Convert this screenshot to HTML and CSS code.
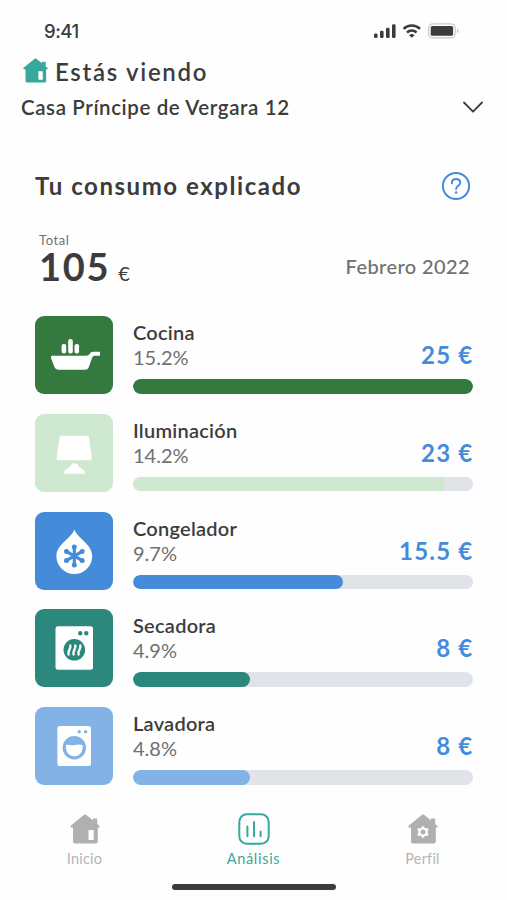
FILE: index.html
```html
<!DOCTYPE html>
<html lang="es">
<head>
<meta charset="utf-8">
<title>Tu consumo explicado</title>
<link rel="stylesheet" href="styles.css">
</head>
<body>
<div class="screen">
  <div class="status">
    <span class="clock">9:41</span>
    <svg class="status-icons" width="88" height="18" viewBox="0 0 88 18">
      <g fill="#3c3c3c">
        <rect x="1" y="11.400" width="3.600" height="4.600" rx="1.300"/><rect x="7" y="8.800" width="3.600" height="7.200" rx="1.300"/><rect x="13" y="5.700" width="3.600" height="10.300" rx="1.300"/><rect x="19" y="2.300" width="3.600" height="13.700" rx="1.300"/>
        <path d="M38.800 15.800l-2.700-2.600a4 4 0 0 1 5.400 0z"/>
      </g>
      <path d="M30.600 6.800a11.800 11.800 0 0 1 16.400 0M34 10.500a7 7 0 0 1 9.600 0" fill="none" stroke="#3c3c3c" stroke-width="2.500"/>
      <rect x="55.600" y="1.900" width="26.600" height="14" rx="4.200" fill="#fff" stroke="#cacaca" stroke-width="1.300"/>
      <rect x="57.700" y="4" width="22.400" height="9.800" rx="1.600" fill="#3c3c3c"/>
      <path d="M84 6.300q3 2.700 0 5.400z" fill="#cacaca"/>
    </svg>
  </div>
  <header class="top">
    <div class="viewing">
      <svg width="25" height="25" viewBox="0 0 30 30"><path fill="#38a79c" fill-rule="evenodd" d="M14 .8Q15 0 16 .8L23 6.300V4.500h4.200v5.500l2.200 1.900q1.100 1.400-.5 1.600H27.800V27.500q0 2-2 2H5q-2 0-2-2V13.500H1.200Q-.3 13.200.7 11.700ZM18.500 16v10h5.200V16Z"/></svg>
      <span class="viewing-title">Estás viendo</span>
    </div>
    <div class="home-select">
      <span class="home-name">Casa Príncipe de Vergara 12</span>
      <svg width="22" height="13" viewBox="0 0 22 13"><path d="M2 1.500L11 10.700L20 1.500" fill="none" stroke="#3c3c3c" stroke-width="1.800" stroke-linecap="round" stroke-linejoin="round"/></svg>
    </div>
  </header>
  <main>
    <div class="heading">
      <h1>Tu consumo explicado</h1>
      <svg width="30" height="30" viewBox="0 0 30 30" fill="none" stroke="#448cd9"><circle cx="15" cy="15" r="13.100" stroke-width="2"/><path d="M10.900 12.200C10.900 6.600 19.300 6.700 19.300 11.700C19.300 14.500 15.100 14.900 15.100 18" stroke-width="2" stroke-linecap="round"/><circle cx="15.100" cy="21.600" r="1.250" fill="#448cd9" stroke="none"/></svg>
    </div>
    <div class="summary">
      <div class="total"><div class="total-label">Total</div><div class="total-line"><span class="total-value">105</span><span class="total-unit">€</span></div></div>
      <div class="month">Febrero 2022</div>
    </div>
    <div class="list">
      <div class="item cocina">
        <div class="tile"><svg viewBox="0 0 78 78"><g fill="#fff"><rect x="26.600" y="28" width="4.600" height="9.500" rx="2"/><rect x="33.200" y="23" width="4.600" height="14.500" rx="2"/><rect x="39.500" y="28" width="4.600" height="9.500" rx="2"/><path d="M17 39.700H51Q53.800 39.700 54.500 38Q55.500 35.700 58.500 35.700H64.200Q65 35.700 65 36.500V39Q65 39.800 64.200 39.800H59.500Q57.800 39.800 57.200 41.500L54 50.500Q52.900 53.700 50 53.700H24Q20.500 53.700 19.200 50.500L16 42Q15.500 39.700 17 39.700Z"/></g></svg></div>
        <div class="info"><div class="name">Cocina</div><div class="pct">15.2%</div><div class="cost">25 €</div><div class="track"><div class="fill" style="width:100%"></div></div></div>
      </div>
      <div class="item luz">
        <div class="tile"><svg viewBox="0 0 78 78"><path fill="#fff" d="M26 21.700H52Q53.700 21.700 54 23.400L56.800 44.300Q57 46.200 55.200 46.200H23.200Q21.400 46.200 21.600 44.300L24.400 23.400Q24.700 21.700 26 21.700ZM37 49.500H42C43.500 53.300 46.500 54.500 49 56Q50.500 57.500 49.500 59.700H29.500Q28.500 57.500 30 56C32.500 54.500 35.500 53.300 37 49.500Z"/></svg></div>
        <div class="info"><div class="name">Iluminación</div><div class="pct">14.2%</div><div class="cost">23 €</div><div class="track"><div class="fill" style="width:91.500%"></div></div></div>
      </div>
      <div class="item congelador">
        <div class="tile"><svg viewBox="0 0 78 78"><path fill="#fff" d="M39.400 17.500C42 26 57.200 32 57.200 44.200A17.900 17.900 0 0 1 21.400 44.200C21.400 32 37 26 39.400 17.500Z"/><g stroke="#448cd9" stroke-width="3.100" stroke-linecap="round"><path d="M39.300 34.200V53.800M30.800 39.100L47.800 48.900M30.800 48.900L47.800 39.100"/></g><g fill="#448cd9"><circle cx="39.300" cy="35" r="2.500"/><circle cx="39.300" cy="53" r="2.500"/><circle cx="31.500" cy="39.500" r="2.500"/><circle cx="47.100" cy="39.500" r="2.500"/><circle cx="31.500" cy="48.500" r="2.500"/><circle cx="47.100" cy="48.500" r="2.500"/></g></svg></div>
        <div class="info"><div class="name">Congelador</div><div class="pct">9.7%</div><div class="cost">15.5 €</div><div class="track"><div class="fill" style="width:62%"></div></div></div>
      </div>
      <div class="item secadora">
        <div class="tile"><svg viewBox="0 0 78 78"><rect x="20.500" y="17.200" width="37.500" height="43.600" rx="2.500" fill="#fff"/><g fill="#2c877c"><circle cx="45.200" cy="24.300" r="2.200"/><circle cx="51.200" cy="24.300" r="2.200"/><circle cx="39.300" cy="40.800" r="10.800"/></g><path d="M35.300 36.500C36.600 40 32 42 33.600 45.400M40.300 36.500C41.600 40 37 42 38.600 45.400M45.300 36.500C46.600 40 42 42 43.600 45.400" fill="none" stroke="#fff" stroke-width="2.400" stroke-linecap="round"/></svg></div>
        <div class="info"><div class="name">Secadora</div><div class="pct">4.9%</div><div class="cost">8 €</div><div class="track"><div class="fill" style="width:34.600%"></div></div></div>
      </div>
      <div class="item lavadora">
        <div class="tile"><svg viewBox="0 0 78 78"><rect x="22.400" y="19" width="33.600" height="40" rx="2.500" fill="#fff"/><g fill="#83b3e6"><circle cx="44.200" cy="24.700" r="1.750"/><circle cx="50.600" cy="24.700" r="1.750"/><circle cx="39.300" cy="40.800" r="11.700"/></g><path fill="#fff" d="M31 38Q33.500 37.300 36 38.200Q38.500 38.700 41 37.700Q44.500 37 47.600 38C48.500 44 45 49.300 39.300 49.300C33.600 49.300 30.100 44 31 38Z"/></svg></div>
        <div class="info"><div class="name">Lavadora</div><div class="pct">4.8%</div><div class="cost">8 €</div><div class="track"><div class="fill" style="width:34.600%"></div></div></div>
      </div>
    </div>
  </main>
  <nav class="tabs">
    <div class="tab"><svg width="32" height="32" viewBox="-1 -1 32 32"><path fill="#b0b0b0" fill-rule="evenodd" d="M14 .8Q15 0 16 .8L23 6.300V4.500h4.200v5.500l2.200 1.900q1.100 1.400-.5 1.600H27.800V27.500q0 2-2 2H5q-2 0-2-2V13.500H1.200Q-.3 13.200.7 11.700ZM18.500 16v10h5.200V16Z"/></svg><span>Inicio</span></div>
    <div class="tab active"><svg width="32" height="32" viewBox="0 0 32 32" fill="none" stroke="#38a79c" stroke-width="2" stroke-linecap="round"><rect x="1.300" y="1.300" width="29.400" height="29.400" rx="7.500"/><path d="M9.400 13.500V23.200M16 9V23.200M22.600 18.500V23.200"/></svg><span>Análisis</span></div>
    <div class="tab"><svg width="32" height="32" viewBox="-1 -1 32 32"><path fill="#b0b0b0" d="M14 .8Q15 0 16 .8L23 6.300V4.500h4.200v5.500l2.200 1.900q1.100 1.400-.5 1.600H27.800V27.500q0 2-2 2H5q-2 0-2-2V13.500H1.200Q-.3 13.200.7 11.700Z"/><path d="M15 13l1.600 2.300 2.900-.1-1.200 2.800 1.200 2.800-2.900-.1-1.600 2.300-1.600-2.300-2.900.1 1.200-2.800-1.200-2.800 2.900.1z" fill="#fff" stroke="#fff" stroke-width="2" stroke-linejoin="round"/><circle cx="15" cy="18" r="2.500" fill="#b0b0b0"/></svg><span>Perfil</span></div>
  </nav>
  <div class="home-bar"></div>
</div>
</body>
</html>
```
FILE: styles.css
```css
* { box-sizing: border-box; }
body { margin: 0; background: #fff; color: #3c3c3c; font-family: Lato, "Liberation Sans", sans-serif; }
svg { display: block; flex: none; }
.screen { width: 507px; height: 900px; overflow: hidden; display: flex; flex-direction: column; background: #fefefe; }
.status { height: 56px; padding: 22px 46px 0 44px; display: flex; justify-content: space-between; align-items: flex-start; }
.clock { font: 500 18.5px/18px Inter, sans-serif; letter-spacing: -.5px; }
.top { height: 104px; padding: 0 23px 0 21px; }
.viewing { height: 32px; padding-left: 2px; display: flex; align-items: center; gap: 7px; }
.viewing svg { margin-top: -4px; }
.viewing-title { font-size: 24px; font-weight: 600; line-height: 32px; letter-spacing: 1.7px; }
.home-select { height: 38px; display: flex; align-items: center; justify-content: space-between; }
.home-name { font-size: 20.500px; font-weight: 600; letter-spacing: .6px; }
main { height: 640px; padding: 0 35px; }
.heading { height: 52px; display: flex; align-items: center; justify-content: space-between; padding-right: 1px; }
h1 { margin: 0; font-size: 24px; line-height: 30px; font-weight: 700; letter-spacing: 1.550px; }
.summary { height: 104.250px; padding: 21px 3px 0 4px; display: flex; justify-content: space-between; }
.total-label { font-size: 13px; line-height: 14px; letter-spacing: .6px; color: #707070; }
.total-line { display: flex; align-items: baseline; gap: 8px; line-height: 38px; }
.total-value { font-size: 38px; font-weight: 700; letter-spacing: 1.700px; }
.total-unit { font-size: 20px; }
.month { font-size: 20px; line-height: 24px; padding-top: 21px; color: #707070; font-weight: 500; letter-spacing: .4px; margin-right: -1px; }
.list { display: grid; gap: 19.700px; }
.item { height: 78px; display: flex; gap: 20px; }
.tile { width: 78px; height: 78px; border-radius: 9px; background: var(--tone); }
.info { width: 339.500px; display: grid; grid-template: 28px 24px 11px 14.500px / 1fr auto; }
.name { grid-area: 1 / 1; font-size: 20px; line-height: 32px; font-weight: 600; letter-spacing: .25px; }
.pct { grid-area: 2 / 1; font-size: 20px; line-height: 26px; color: #707070; }
.cost { grid-area: 1 / 2 / 4 / 3; align-self: end; font-size: 24px; line-height: 30px; margin-bottom: 9px; font-weight: 700; color: #448cd9; letter-spacing: 1.2px; margin-right: -1px; }
.track { grid-area: 4 / 1 / 5 / 3; border-radius: 8px; background: #e0e4e8; overflow: hidden; }
.fill { height: 100%; border-radius: 8px; background: var(--tone); }
.cocina { --tone: #34793d; }
.luz { --tone: #cfe9d0; }
.luz .fill { border-radius: 8px 2px 2px 8px; }
.congelador { --tone: #448cd9; }
.secadora { --tone: #2c877c; }
.lavadora { --tone: #83b3e6; }
.tabs { height: 84px; padding-top: 13px; display: grid; grid-template-columns: repeat(3, 169px); }
.tab { display: flex; flex-direction: column; align-items: center; gap: 4px; font-size: 14.500px; line-height: 20px; letter-spacing: .2px; color: #b5b5b5; }
.active { color: #38a79c; letter-spacing: .7px; }
.home-bar { width: 164px; height: 6px; border-radius: 3px; background: #3c3c3c; align-self: center; }
```
